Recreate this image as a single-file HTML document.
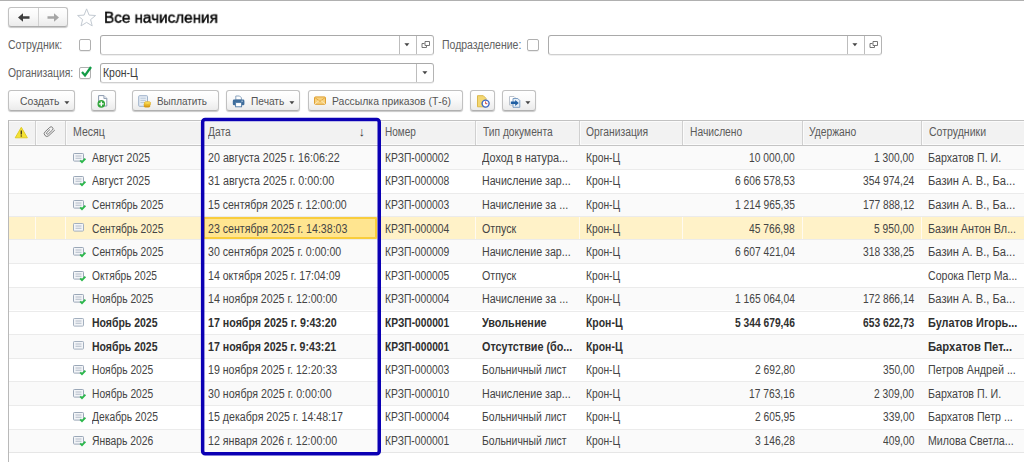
<!DOCTYPE html>
<html lang="ru">
<head>
<meta charset="utf-8">
<title>Все начисления</title>
<style>
html,body{margin:0;padding:0;}
body{width:1024px;height:462px;overflow:hidden;background:#fff;position:relative;
 font-family:"Liberation Sans",Arial,sans-serif;font-size:11px;color:#333;}
.abs{position:absolute;}
#topline{position:absolute;left:0;top:0;width:1024px;height:1px;background:#b0b0b0;}
.btn{position:absolute;box-sizing:border-box;height:21px;top:90px;border:1px solid #c1c1c1;border-bottom-color:#b0b0b0;border-radius:3px;
 background:linear-gradient(#ffffff,#fafafa 45%,#ebebeb);box-shadow:0 1px 1px rgba(0,0,0,.22);}
.caret{position:absolute;width:0;height:0;border-left:3px solid transparent;border-right:3px solid transparent;border-top:3px solid #444;}
.chk{position:absolute;box-sizing:border-box;width:12px;height:12px;border:1px solid #b0b0b0;border-radius:2px;background:#fff;box-shadow:0 1px 0 rgba(0,0,0,.07);}
.inp{position:absolute;box-sizing:border-box;height:20px;border:1px solid #adadad;border-color:#a9a9a9 #b4b4b4 #cfcfcf #acacac;border-radius:3px;background:#fff;box-shadow:0 1px 0 rgba(0,0,0,.06);}
.inp i{position:absolute;top:0;bottom:0;width:1px;background:#bdbdbd;}
#thead{position:absolute;left:8px;top:120px;width:1016px;height:26px;background:#f2f2f2;border-top:1px solid #c2c2c2;border-bottom:1px solid #c4c4c4;box-sizing:border-box;box-shadow:inset 0 1px 0 #fbfbfb,inset 0 -1px 0 #fbfbfb;}
#thead i{position:absolute;top:0;bottom:0;width:1px;background:#d0d0d0;box-shadow:1px 0 0 #fbfbfb;}
#tleft{position:absolute;left:8px;top:120px;width:1px;height:342px;background:#b9b9b9;}
.row{position:absolute;left:9px;width:1015px;height:23.6px;border-top:1px solid #ebebeb;box-sizing:border-box;background:#fff;}
.row.first{border-top:none;}
#lastline{position:absolute;left:9px;width:1015px;height:1px;top:452.1px;background:#e6e6e6;}
.row.alt{background:#fafafa;}
.row.sel{background:#fff2c8;}
.row .vd{position:absolute;top:0;bottom:0;width:1px;background:#fffaf0;margin-left:-9px;}
.selcell{position:absolute;left:194px;top:0px;width:174px;height:22px;box-sizing:border-box;background:#ffe590;border:2px solid #f9cd3c;border-radius:1px;}
.ric{position:absolute;left:73px;}
.t{position:absolute;white-space:nowrap;transform-origin:0 0;}
</style>
</head>
<body>
<div id="topline"></div>

<!-- nav buttons -->
<div class="abs" style="left:8px;top:7px;width:60px;height:20px;box-sizing:border-box;border:1px solid #c1c1c1;border-bottom-color:#adadad;border-radius:3px;background:linear-gradient(#fff,#f8f8f8 50%,#ebebeb);box-shadow:0 1px 1px rgba(0,0,0,.22);">
 <i class="abs" style="left:29px;top:0;bottom:0;width:1px;background:#d0d0d0"></i>
 <svg class="abs" style="left:8px;top:4px" width="14" height="11" viewBox="0 0 14 11"><path d="M1 5.5L6 1.2V4.3H12.5V6.7H6V9.8Z" fill="#3e3e3e"/></svg>
 <svg class="abs" style="left:37px;top:4px" width="14" height="11" viewBox="0 0 14 11"><path d="M13 5.5L8 1.2V4.3H1.5V6.7H8V9.8Z" fill="#a6a6a6"/></svg>
</div>
<svg class="abs" style="left:76px;top:7px" width="22" height="21" viewBox="0 0 22 21"><path d="M10.6 1.9l2.5 6.2 6.5.4-5 4.1 1.6 6.3-5.6-3.5-5.6 3.5 1.6-6.3-5-4.1 6.5-.4z" fill="#fff" stroke="#c3cad2" stroke-width="1"/></svg>

<!-- filters row 1 -->
<div class="chk" style="left:79px;top:39px"></div>
<div class="inp" style="left:100px;top:35px;width:334px"><i style="left:298px"></i><i style="left:315px"></i>
 <svg class="abs" style="left:303.4px;top:7.0px" width="6" height="4" viewBox="0 0 6 4"><path d="M0.4 0.3h5l-2.5 2.9z" fill="#454545"/></svg>
 <svg class="abs" style="left:320px;top:4px" width="10" height="10" viewBox="0 0 10 10"><path d="M4 1.5h4.5v4h-4.5z M3.5 3.5H1v4h4.5V6" fill="none" stroke="#666" stroke-width=".9"/></svg>
</div>
<div class="chk" style="left:527px;top:39px"></div>
<div class="inp" style="left:548px;top:35px;width:334px"><i style="left:298px"></i><i style="left:315px"></i>
 <svg class="abs" style="left:303.4px;top:7.0px" width="6" height="4" viewBox="0 0 6 4"><path d="M0.4 0.3h5l-2.5 2.9z" fill="#454545"/></svg>
 <svg class="abs" style="left:320px;top:4px" width="10" height="10" viewBox="0 0 10 10"><path d="M4 1.5h4.5v4h-4.5z M3.5 3.5H1v4h4.5V6" fill="none" stroke="#666" stroke-width=".9"/></svg>
</div>

<!-- filters row 2 -->
<div class="chk" style="left:79px;top:67px"><svg class="abs" style="left:0;top:-3px" width="13" height="13" viewBox="0 0 13 13"><path d="M2 7l3 3.4L11 2" fill="none" stroke="#129c46" stroke-width="2.3"/></svg></div>
<div class="inp" style="left:100px;top:63px;width:334px"><i style="left:315px"></i>
 <svg class="abs" style="left:321.0px;top:7.0px" width="6" height="4" viewBox="0 0 6 4"><path d="M0.4 0.3h5l-2.5 2.9z" fill="#454545"/></svg>
</div>

<!-- toolbar -->
<div class="btn" style="left:8px;width:67px"><svg class="abs" style="left:55.4px;top:10.0px" width="6" height="4" viewBox="0 0 6 4"><path d="M0.4 0.3h5l-2.5 2.9z" fill="#454545"/></svg></div>
<div class="btn" style="left:91px;width:25px">
 <svg class="abs" style="left:4px;top:3px" width="16" height="15" viewBox="0 0 16 15"><path d="M2.6 1.6h5.3l2.9 2.9v7.5h-8.2z" fill="#fff" stroke="#8a99ae" stroke-width="1"/><path d="M7.9 1.6v2.9h2.9" fill="#e9edf2" stroke="#8a99ae" stroke-width=".9"/><circle cx="5.3" cy="9.9" r="3.8" fill="#2fa53a"/><path d="M5.3 7.5v4.8M2.9 9.9h4.8" stroke="#fff" stroke-width="1.4"/></svg>
</div>
<div class="btn" style="left:132px;width:87px">
 <svg class="abs" style="left:4px;top:3px" width="16" height="15" viewBox="0 0 16 15"><rect x="1.7" y="1.7" width="8.8" height="10.6" rx=".8" fill="#e6edf5" stroke="#9db1c9"/><path d="M3.4 4.2h5.4M3.4 6.4h5.4M3.4 8.6h5.4" stroke="#b7c6d8" stroke-width="1"/><ellipse cx="10" cy="12" rx="3.3" ry="1.5" fill="#d69b18"/><ellipse cx="10.2" cy="10.4" rx="3.3" ry="1.5" fill="#ecbb2c" stroke="#c98f14" stroke-width=".4"/><ellipse cx="10.5" cy="8.9" rx="3.3" ry="1.5" fill="#f8d853" stroke="#d4a01c" stroke-width=".5"/></svg>
</div>
<div class="btn" style="left:226px;width:74px">
 <svg class="abs" style="left:5px;top:4px" width="14" height="13" viewBox="0 0 14 13"><path d="M3.8 1h3.8l1.8 1.8V5H3.8z" fill="#fff" stroke="#7f9bb8" stroke-width=".9"/><rect x=".8" y="4.6" width="11.6" height="5.6" rx="1.3" fill="#3f6d9c"/><rect x="3.6" y="7.6" width="6" height="4.2" fill="#fff" stroke="#4f7aa6" stroke-width=".9"/><rect x="9.3" y="5.7" width="1.6" height=".9" fill="#cfe0f0"/></svg>
 <svg class="abs" style="left:62.3px;top:10.0px" width="6" height="4" viewBox="0 0 6 4"><path d="M0.4 0.3h5l-2.5 2.9z" fill="#454545"/></svg></div>
<div class="btn" style="left:308px;width:155px">
 <svg class="abs" style="left:4px;top:5px" width="14" height="10" viewBox="0 0 14 10"><rect x="1.5" y=".9" width="11" height="7.4" rx="1" fill="#f7d07c" stroke="#dfa032"/><path d="M2 1.6l5 3.8 5-3.8" fill="none" stroke="#e2a63c" stroke-width=".9"/><path d="M2 7.8l3.8-3M12 7.8l-3.8-3" fill="none" stroke="#fbe9c0" stroke-width=".9"/></svg>
</div>
<div class="btn" style="left:470px;width:25px">
 <svg class="abs" style="left:5px;top:3px" width="15" height="15" viewBox="0 0 15 15"><path d="M1.5 1.7h5.8l2.7 2.7v8.4h-8.5z" fill="#f3d772" stroke="#dcb84a"/><circle cx="9.6" cy="9.6" r="3.5" fill="#fff" stroke="#3b66c4" stroke-width="1.4"/><path d="M9.6 7.4v2.3h1.7" fill="none" stroke="#d0342c" stroke-width=".9"/></svg>
</div>
<div class="btn" style="left:502px;width:34px">
 <svg class="abs" style="left:5px;top:4px" width="14" height="14" viewBox="0 0 14 14"><path d="M1.5 1.5h4.5l2 2v6.5h-6.5z" fill="#fff" stroke="#b4bcc6" stroke-width=".9"/><path d="M5 3.5h4.8l2 2v6.8H5z" fill="#e6eff8" stroke="#6f94bd" stroke-width=".9"/><path d="M2.8 6.6h4.4V4.9l3.6 3-3.6 3V9.1H2.8z" fill="#1f5fa3"/></svg>
 <svg class="abs" style="left:22.3px;top:10.0px" width="6" height="4" viewBox="0 0 6 4"><path d="M0.4 0.3h5l-2.5 2.9z" fill="#454545"/></svg></div>

<!-- table -->
<div id="thead">
 <i style="left:27px"></i><i style="left:57px"></i><i style="left:193px"></i><i style="left:371px"></i><i style="left:467px"></i><i style="left:571px"></i><i style="left:674px"></i><i style="left:794px"></i><i style="left:913px"></i>
 <svg class="abs" style="left:6.2px;top:4.6px" width="15" height="13" viewBox="0 0 15 13"><path d="M7.3 1.3L13.4 11.8H1.2z" fill="#f5e235" stroke="#dcc81e" stroke-width=".9" stroke-linejoin="round"/><path d="M7.3 4.6v4" stroke="#4a4020" stroke-width="1.4"/><circle cx="7.3" cy="10" r=".8" fill="#4a4020"/></svg>
 <svg class="abs" style="left:34.5px;top:4px" width="13" height="13" viewBox="0 0 13 13"><g transform="translate(6.3,6.5) rotate(47)"><path d="M2.7,-5V3.2A2.7,2.7 0 0 1 -2.7,3.2V-3.2A1.9,1.9 0 0 1 1.1,-3.2V2.4A1.05,1.05 0 0 1 -1,2.4V-1.8" fill="none" stroke="#707070" stroke-width=".85"/></g></svg>
 <span class="abs" style="left:350.6px;top:3.5px;font-size:13px;line-height:14px;color:#333">↓</span>
</div>
<div class="row alt first" style="top:146.0px;height:22.9px">
</div>
<svg class="ric" style="top:152.5px" width="14" height="11" viewBox="0 0 14 11"><rect x="0.5" y="0.5" width="10" height="7.6" rx="0.8" fill="#f3f5f8" stroke="#9aa7b7" stroke-width="1"/><path d="M2.5 3h6M2.5 5.2h6" stroke="#b3bcc7" stroke-width="1.1"/><path d="M7.2 7.3l1.8 1.9 3.4-3.6" fill="none" stroke="#2bb84b" stroke-width="1.8"/></svg>
<div class="row" style="top:168.9px;height:23.6px">
</div>
<svg class="ric" style="top:176.1px" width="14" height="11" viewBox="0 0 14 11"><rect x="0.5" y="0.5" width="10" height="7.6" rx="0.8" fill="#f3f5f8" stroke="#9aa7b7" stroke-width="1"/><path d="M2.5 3h6M2.5 5.2h6" stroke="#b3bcc7" stroke-width="1.1"/><path d="M7.2 7.3l1.8 1.9 3.4-3.6" fill="none" stroke="#2bb84b" stroke-width="1.8"/></svg>
<div class="row alt" style="top:192.5px;height:23.6px">
</div>
<svg class="ric" style="top:199.7px" width="14" height="11" viewBox="0 0 14 11"><rect x="0.5" y="0.5" width="10" height="7.6" rx="0.8" fill="#f3f5f8" stroke="#9aa7b7" stroke-width="1"/><path d="M2.5 3h6M2.5 5.2h6" stroke="#b3bcc7" stroke-width="1.1"/><path d="M7.2 7.3l1.8 1.9 3.4-3.6" fill="none" stroke="#2bb84b" stroke-width="1.8"/></svg>
<div class="row sel" style="top:216.0px;height:23.0px">
<i class="vd" style="left:35px"></i><i class="vd" style="left:65px"></i><i class="vd" style="left:201px"></i><i class="vd" style="left:379px"></i><i class="vd" style="left:475px"></i><i class="vd" style="left:579px"></i><i class="vd" style="left:682px"></i><i class="vd" style="left:802px"></i><i class="vd" style="left:921px"></i><i class="selcell"></i>
</div>
<svg class="ric" style="top:223.3px" width="14" height="11" viewBox="0 0 14 11"><rect x="0.5" y="0.5" width="10" height="7.6" rx="0.8" fill="#f3f5f8" stroke="#a3afbe" stroke-width="1"/><path d="M2.5 3h6M2.5 5.2h6" stroke="#b3bcc7" stroke-width="1.1"/></svg>
<div class="row alt" style="top:239.0px;height:24.8px">
</div>
<svg class="ric" style="top:246.9px" width="14" height="11" viewBox="0 0 14 11"><rect x="0.5" y="0.5" width="10" height="7.6" rx="0.8" fill="#f3f5f8" stroke="#9aa7b7" stroke-width="1"/><path d="M2.5 3h6M2.5 5.2h6" stroke="#b3bcc7" stroke-width="1.1"/><path d="M7.2 7.3l1.8 1.9 3.4-3.6" fill="none" stroke="#2bb84b" stroke-width="1.8"/></svg>
<div class="row" style="top:263.3px;height:23.6px">
</div>
<svg class="ric" style="top:270.5px" width="14" height="11" viewBox="0 0 14 11"><rect x="0.5" y="0.5" width="10" height="7.6" rx="0.8" fill="#f3f5f8" stroke="#9aa7b7" stroke-width="1"/><path d="M2.5 3h6M2.5 5.2h6" stroke="#b3bcc7" stroke-width="1.1"/><path d="M7.2 7.3l1.8 1.9 3.4-3.6" fill="none" stroke="#2bb84b" stroke-width="1.8"/></svg>
<div class="row alt" style="top:286.9px;height:23.6px">
</div>
<svg class="ric" style="top:294.1px" width="14" height="11" viewBox="0 0 14 11"><rect x="0.5" y="0.5" width="10" height="7.6" rx="0.8" fill="#f3f5f8" stroke="#9aa7b7" stroke-width="1"/><path d="M2.5 3h6M2.5 5.2h6" stroke="#b3bcc7" stroke-width="1.1"/><path d="M7.2 7.3l1.8 1.9 3.4-3.6" fill="none" stroke="#2bb84b" stroke-width="1.8"/></svg>
<div class="row" style="top:310.5px;height:23.6px">
</div>
<svg class="ric" style="top:317.7px" width="14" height="11" viewBox="0 0 14 11"><rect x="0.5" y="0.5" width="10" height="7.6" rx="0.8" fill="#f3f5f8" stroke="#a3afbe" stroke-width="1"/><path d="M2.5 3h6M2.5 5.2h6" stroke="#b3bcc7" stroke-width="1.1"/></svg>
<div class="row alt" style="top:334.1px;height:23.6px">
</div>
<svg class="ric" style="top:341.3px" width="14" height="11" viewBox="0 0 14 11"><rect x="0.5" y="0.5" width="10" height="7.6" rx="0.8" fill="#f3f5f8" stroke="#a3afbe" stroke-width="1"/><path d="M2.5 3h6M2.5 5.2h6" stroke="#b3bcc7" stroke-width="1.1"/></svg>
<div class="row" style="top:357.7px;height:23.6px">
</div>
<svg class="ric" style="top:364.9px" width="14" height="11" viewBox="0 0 14 11"><rect x="0.5" y="0.5" width="10" height="7.6" rx="0.8" fill="#f3f5f8" stroke="#9aa7b7" stroke-width="1"/><path d="M2.5 3h6M2.5 5.2h6" stroke="#b3bcc7" stroke-width="1.1"/><path d="M7.2 7.3l1.8 1.9 3.4-3.6" fill="none" stroke="#2bb84b" stroke-width="1.8"/></svg>
<div class="row alt" style="top:381.3px;height:23.6px">
</div>
<svg class="ric" style="top:388.5px" width="14" height="11" viewBox="0 0 14 11"><rect x="0.5" y="0.5" width="10" height="7.6" rx="0.8" fill="#f3f5f8" stroke="#9aa7b7" stroke-width="1"/><path d="M2.5 3h6M2.5 5.2h6" stroke="#b3bcc7" stroke-width="1.1"/><path d="M7.2 7.3l1.8 1.9 3.4-3.6" fill="none" stroke="#2bb84b" stroke-width="1.8"/></svg>
<div class="row" style="top:404.9px;height:23.6px">
</div>
<svg class="ric" style="top:412.1px" width="14" height="11" viewBox="0 0 14 11"><rect x="0.5" y="0.5" width="10" height="7.6" rx="0.8" fill="#f3f5f8" stroke="#9aa7b7" stroke-width="1"/><path d="M2.5 3h6M2.5 5.2h6" stroke="#b3bcc7" stroke-width="1.1"/><path d="M7.2 7.3l1.8 1.9 3.4-3.6" fill="none" stroke="#2bb84b" stroke-width="1.8"/></svg>
<div class="row alt" style="top:428.5px;height:23.6px">
</div>
<svg class="ric" style="top:435.7px" width="14" height="11" viewBox="0 0 14 11"><rect x="0.5" y="0.5" width="10" height="7.6" rx="0.8" fill="#f3f5f8" stroke="#9aa7b7" stroke-width="1"/><path d="M2.5 3h6M2.5 5.2h6" stroke="#b3bcc7" stroke-width="1.1"/><path d="M7.2 7.3l1.8 1.9 3.4-3.6" fill="none" stroke="#2bb84b" stroke-width="1.8"/></svg>
<div id="lastline"></div>
<span class="t" style="left:104.15px;top:9.00px;font-size:16px;line-height:20px;color:#000;transform:scale(0.9534,0.9167);will-change:transform;-webkit-text-stroke:0.45px #000;">Все начисления</span>
<span class="t" style="left:8.10px;top:38.00px;font-size:12px;line-height:15px;color:#606060;transform:scaleX(0.8794);">Сотрудник:</span>
<span class="t" style="left:442.20px;top:38.00px;font-size:12px;line-height:15px;color:#606060;transform:scaleX(0.8735);">Подразделение:</span>
<span class="t" style="left:8.10px;top:66.00px;font-size:12px;line-height:15px;color:#606060;transform:scaleX(0.8610);">Организация:</span>
<span class="t" style="left:103.40px;top:66.00px;font-size:12px;line-height:15px;color:#3a3a3a;transform:scaleX(0.8709);">Крон-Ц</span>
<span class="t" style="left:19.90px;top:94.00px;font-size:11.6px;line-height:14px;color:#555;transform:scaleX(0.8973);">Создать</span>
<span class="t" style="left:156.80px;top:94.00px;font-size:11.6px;line-height:14px;color:#555;transform:scaleX(0.8562);">Выплатить</span>
<span class="t" style="left:250.70px;top:94.00px;font-size:11.6px;line-height:14px;color:#555;transform:scaleX(0.8777);">Печать</span>
<span class="t" style="left:332.30px;top:94.00px;font-size:11.6px;line-height:14px;color:#555;transform:scaleX(0.8982);">Рассылка приказов (Т-6)</span>
<span class="t" style="left:72.50px;top:125.00px;font-size:12px;line-height:15px;color:#5a5a5a;transform:scaleX(0.8815);">Месяц</span>
<span class="t" style="left:208.00px;top:125.00px;font-size:12px;line-height:15px;color:#5a5a5a;transform:scaleX(0.8551);">Дата</span>
<span class="t" style="left:384.60px;top:125.00px;font-size:12px;line-height:15px;color:#5a5a5a;transform:scaleX(0.8346);">Номер</span>
<span class="t" style="left:483.00px;top:125.00px;font-size:12px;line-height:15px;color:#5a5a5a;transform:scaleX(0.8518);">Тип документа</span>
<span class="t" style="left:586.30px;top:125.00px;font-size:12px;line-height:15px;color:#5a5a5a;transform:scaleX(0.8584);">Организация</span>
<span class="t" style="left:689.50px;top:125.00px;font-size:12px;line-height:15px;color:#5a5a5a;transform:scaleX(0.8560);">Начислено</span>
<span class="t" style="left:809.20px;top:125.00px;font-size:12px;line-height:15px;color:#5a5a5a;transform:scaleX(0.8580);">Удержано</span>
<span class="t" style="left:928.90px;top:125.00px;font-size:12px;line-height:15px;color:#5a5a5a;transform:scaleX(0.8772);">Сотрудники</span>
<span class="t" style="left:91.70px;top:151.00px;font-size:12px;line-height:15px;color:#444;transform:scaleX(0.8771);">Август 2025</span>
<span class="t" style="left:208.00px;top:151.00px;font-size:12px;line-height:15px;color:#444;transform:scaleX(0.8920);">20 августа 2025 г. 16:06:22</span>
<span class="t" style="left:384.50px;top:151.00px;font-size:12px;line-height:15px;color:#444;transform:scaleX(0.8604);">КРЗП-000002</span>
<span class="t" style="left:482.00px;top:151.00px;font-size:12px;line-height:15px;color:#444;transform:scaleX(0.9063);">Доход в натура...</span>
<span class="t" style="left:586.30px;top:151.00px;font-size:12px;line-height:15px;color:#444;transform:scaleX(0.8558);">Крон-Ц</span>
<span class="t" style="left:749.01px;top:151.00px;font-size:12px;line-height:15px;color:#444;transform:scaleX(0.8543);">10 000,00</span>
<span class="t" style="left:874.11px;top:151.00px;font-size:12px;line-height:15px;color:#444;transform:scaleX(0.8543);">1 300,00</span>
<span class="t" style="left:928.20px;top:151.00px;font-size:12px;line-height:15px;color:#444;transform:scaleX(0.8887);">Бархатов П. И.</span>
<span class="t" style="left:91.70px;top:174.00px;font-size:12px;line-height:15px;color:#444;transform:scaleX(0.8771);">Август 2025</span>
<span class="t" style="left:208.00px;top:174.00px;font-size:12px;line-height:15px;color:#444;transform:scaleX(0.8952);">31 августа 2025 г. 0:00:00</span>
<span class="t" style="left:384.50px;top:174.00px;font-size:12px;line-height:15px;color:#444;transform:scaleX(0.8604);">КРЗП-000008</span>
<span class="t" style="left:482.00px;top:174.00px;font-size:12px;line-height:15px;color:#444;transform:scaleX(0.8869);">Начисление зар...</span>
<span class="t" style="left:586.30px;top:174.00px;font-size:12px;line-height:15px;color:#444;transform:scaleX(0.8558);">Крон-Ц</span>
<span class="t" style="left:734.76px;top:174.00px;font-size:12px;line-height:15px;color:#444;transform:scaleX(0.8543);">6 606 578,53</span>
<span class="t" style="left:862.71px;top:174.00px;font-size:12px;line-height:15px;color:#444;transform:scaleX(0.8543);">354 974,24</span>
<span class="t" style="left:928.20px;top:174.00px;font-size:12px;line-height:15px;color:#444;transform:scaleX(0.9307);">Базин А. В., Ба...</span>
<span class="t" style="left:91.70px;top:198.00px;font-size:12px;line-height:15px;color:#444;transform:scaleX(0.8512);">Сентябрь 2025</span>
<span class="t" style="left:208.00px;top:198.00px;font-size:12px;line-height:15px;color:#444;transform:scaleX(0.8805);">15 сентября 2025 г. 12:00:00</span>
<span class="t" style="left:384.50px;top:198.00px;font-size:12px;line-height:15px;color:#444;transform:scaleX(0.8604);">КРЗП-000003</span>
<span class="t" style="left:482.00px;top:198.00px;font-size:12px;line-height:15px;color:#444;transform:scaleX(0.8917);">Начисление за ...</span>
<span class="t" style="left:586.30px;top:198.00px;font-size:12px;line-height:15px;color:#444;transform:scaleX(0.8558);">Крон-Ц</span>
<span class="t" style="left:734.76px;top:198.00px;font-size:12px;line-height:15px;color:#444;transform:scaleX(0.8543);">1 214 965,35</span>
<span class="t" style="left:862.71px;top:198.00px;font-size:12px;line-height:15px;color:#444;transform:scaleX(0.8543);">177 888,12</span>
<span class="t" style="left:928.20px;top:198.00px;font-size:12px;line-height:15px;color:#444;transform:scaleX(0.9307);">Базин А. В., Ба...</span>
<span class="t" style="left:91.70px;top:222.00px;font-size:12px;line-height:15px;color:#444;transform:scaleX(0.8512);">Сентябрь 2025</span>
<span class="t" style="left:208.00px;top:222.00px;font-size:12px;line-height:15px;color:#444;transform:scaleX(0.8849);">23 сентября 2025 г. 14:38:03</span>
<span class="t" style="left:384.50px;top:222.00px;font-size:12px;line-height:15px;color:#444;transform:scaleX(0.8604);">КРЗП-000004</span>
<span class="t" style="left:482.00px;top:222.00px;font-size:12px;line-height:15px;color:#444;transform:scaleX(0.8879);">Отпуск</span>
<span class="t" style="left:586.30px;top:222.00px;font-size:12px;line-height:15px;color:#444;transform:scaleX(0.8558);">Крон-Ц</span>
<span class="t" style="left:749.01px;top:222.00px;font-size:12px;line-height:15px;color:#444;transform:scaleX(0.8543);">45 766,98</span>
<span class="t" style="left:874.11px;top:222.00px;font-size:12px;line-height:15px;color:#444;transform:scaleX(0.8543);">5 950,00</span>
<span class="t" style="left:928.20px;top:222.00px;font-size:12px;line-height:15px;color:#444;transform:scaleX(0.8970);">Базин Антон Вл...</span>
<span class="t" style="left:91.70px;top:245.00px;font-size:12px;line-height:15px;color:#444;transform:scaleX(0.8512);">Сентябрь 2025</span>
<span class="t" style="left:208.00px;top:245.00px;font-size:12px;line-height:15px;color:#444;transform:scaleX(0.8830);">30 сентября 2025 г. 0:00:00</span>
<span class="t" style="left:384.50px;top:245.00px;font-size:12px;line-height:15px;color:#444;transform:scaleX(0.8604);">КРЗП-000009</span>
<span class="t" style="left:482.00px;top:245.00px;font-size:12px;line-height:15px;color:#444;transform:scaleX(0.8869);">Начисление зар...</span>
<span class="t" style="left:586.30px;top:245.00px;font-size:12px;line-height:15px;color:#444;transform:scaleX(0.8558);">Крон-Ц</span>
<span class="t" style="left:734.76px;top:245.00px;font-size:12px;line-height:15px;color:#444;transform:scaleX(0.8543);">6 607 421,04</span>
<span class="t" style="left:862.71px;top:245.00px;font-size:12px;line-height:15px;color:#444;transform:scaleX(0.8543);">318 338,25</span>
<span class="t" style="left:928.20px;top:245.00px;font-size:12px;line-height:15px;color:#444;transform:scaleX(0.9307);">Базин А. В., Ба...</span>
<span class="t" style="left:91.70px;top:269.00px;font-size:12px;line-height:15px;color:#444;transform:scaleX(0.8495);">Октябрь 2025</span>
<span class="t" style="left:208.00px;top:269.00px;font-size:12px;line-height:15px;color:#444;transform:scaleX(0.8810);">14 октября 2025 г. 17:04:09</span>
<span class="t" style="left:384.50px;top:269.00px;font-size:12px;line-height:15px;color:#444;transform:scaleX(0.8604);">КРЗП-000005</span>
<span class="t" style="left:482.00px;top:269.00px;font-size:12px;line-height:15px;color:#444;transform:scaleX(0.8879);">Отпуск</span>
<span class="t" style="left:586.30px;top:269.00px;font-size:12px;line-height:15px;color:#444;transform:scaleX(0.8558);">Крон-Ц</span>
<span class="t" style="left:928.20px;top:269.00px;font-size:12px;line-height:15px;color:#444;transform:scaleX(0.8804);">Сорока Петр Ма...</span>
<span class="t" style="left:91.70px;top:292.00px;font-size:12px;line-height:15px;color:#444;transform:scaleX(0.8543);">Ноябрь 2025</span>
<span class="t" style="left:208.00px;top:292.00px;font-size:12px;line-height:15px;color:#444;transform:scaleX(0.8847);">14 ноября 2025 г. 12:00:00</span>
<span class="t" style="left:384.50px;top:292.00px;font-size:12px;line-height:15px;color:#444;transform:scaleX(0.8604);">КРЗП-000004</span>
<span class="t" style="left:482.00px;top:292.00px;font-size:12px;line-height:15px;color:#444;transform:scaleX(0.8917);">Начисление за ...</span>
<span class="t" style="left:586.30px;top:292.00px;font-size:12px;line-height:15px;color:#444;transform:scaleX(0.8558);">Крон-Ц</span>
<span class="t" style="left:734.76px;top:292.00px;font-size:12px;line-height:15px;color:#444;transform:scaleX(0.8543);">1 165 064,04</span>
<span class="t" style="left:862.71px;top:292.00px;font-size:12px;line-height:15px;color:#444;transform:scaleX(0.8543);">172 866,14</span>
<span class="t" style="left:928.20px;top:292.00px;font-size:12px;line-height:15px;color:#444;transform:scaleX(0.9307);">Базин А. В., Ба...</span>
<span class="t" style="left:91.70px;top:316.00px;font-size:12px;line-height:15px;color:#303030;transform:scaleX(0.8737);font-weight:bold;">Ноябрь 2025</span>
<span class="t" style="left:208.00px;top:316.00px;font-size:12px;line-height:15px;color:#303030;transform:scaleX(0.8884);font-weight:bold;">17 ноября 2025 г. 9:43:20</span>
<span class="t" style="left:384.50px;top:316.00px;font-size:12px;line-height:15px;color:#303030;transform:scaleX(0.8523);font-weight:bold;">КРЗП-000001</span>
<span class="t" style="left:482.00px;top:316.00px;font-size:12px;line-height:15px;color:#303030;transform:scaleX(0.9038);font-weight:bold;">Увольнение</span>
<span class="t" style="left:586.30px;top:316.00px;font-size:12px;line-height:15px;color:#303030;transform:scaleX(0.8691);font-weight:bold;">Крон-Ц</span>
<span class="t" style="left:734.76px;top:316.00px;font-size:12px;line-height:15px;color:#303030;transform:scaleX(0.8543);font-weight:bold;">5 344 679,46</span>
<span class="t" style="left:862.71px;top:316.00px;font-size:12px;line-height:15px;color:#303030;transform:scaleX(0.8543);font-weight:bold;">653 622,73</span>
<span class="t" style="left:928.20px;top:316.00px;font-size:12px;line-height:15px;color:#303030;transform:scaleX(0.9062);font-weight:bold;">Булатов Игорь...</span>
<span class="t" style="left:91.70px;top:340.00px;font-size:12px;line-height:15px;color:#303030;transform:scaleX(0.8737);font-weight:bold;">Ноябрь 2025</span>
<span class="t" style="left:208.00px;top:340.00px;font-size:12px;line-height:15px;color:#303030;transform:scaleX(0.8850);font-weight:bold;">17 ноября 2025 г. 9:43:21</span>
<span class="t" style="left:384.50px;top:340.00px;font-size:12px;line-height:15px;color:#303030;transform:scaleX(0.8523);font-weight:bold;">КРЗП-000001</span>
<span class="t" style="left:482.00px;top:340.00px;font-size:12px;line-height:15px;color:#303030;transform:scaleX(0.9001);font-weight:bold;">Отсутствие (бо...</span>
<span class="t" style="left:586.30px;top:340.00px;font-size:12px;line-height:15px;color:#303030;transform:scaleX(0.8691);font-weight:bold;">Крон-Ц</span>
<span class="t" style="left:928.20px;top:340.00px;font-size:12px;line-height:15px;color:#303030;transform:scaleX(0.9394);font-weight:bold;">Бархатов Пет...</span>
<span class="t" style="left:91.70px;top:363.00px;font-size:12px;line-height:15px;color:#444;transform:scaleX(0.8543);">Ноябрь 2025</span>
<span class="t" style="left:208.00px;top:363.00px;font-size:12px;line-height:15px;color:#444;transform:scaleX(0.8847);">19 ноября 2025 г. 12:20:33</span>
<span class="t" style="left:384.50px;top:363.00px;font-size:12px;line-height:15px;color:#444;transform:scaleX(0.8604);">КРЗП-000003</span>
<span class="t" style="left:482.00px;top:363.00px;font-size:12px;line-height:15px;color:#444;transform:scaleX(0.8663);">Больничный лист</span>
<span class="t" style="left:586.30px;top:363.00px;font-size:12px;line-height:15px;color:#444;transform:scaleX(0.8558);">Крон-Ц</span>
<span class="t" style="left:754.71px;top:363.00px;font-size:12px;line-height:15px;color:#444;transform:scaleX(0.8543);">2 692,80</span>
<span class="t" style="left:882.66px;top:363.00px;font-size:12px;line-height:15px;color:#444;transform:scaleX(0.8543);">350,00</span>
<span class="t" style="left:928.20px;top:363.00px;font-size:12px;line-height:15px;color:#444;transform:scaleX(0.8916);">Петров Андрей ...</span>
<span class="t" style="left:91.70px;top:387.00px;font-size:12px;line-height:15px;color:#444;transform:scaleX(0.8543);">Ноябрь 2025</span>
<span class="t" style="left:208.00px;top:387.00px;font-size:12px;line-height:15px;color:#444;transform:scaleX(0.8876);">30 ноября 2025 г. 0:00:00</span>
<span class="t" style="left:384.50px;top:387.00px;font-size:12px;line-height:15px;color:#444;transform:scaleX(0.8604);">КРЗП-000010</span>
<span class="t" style="left:482.00px;top:387.00px;font-size:12px;line-height:15px;color:#444;transform:scaleX(0.8869);">Начисление зар...</span>
<span class="t" style="left:586.30px;top:387.00px;font-size:12px;line-height:15px;color:#444;transform:scaleX(0.8558);">Крон-Ц</span>
<span class="t" style="left:749.01px;top:387.00px;font-size:12px;line-height:15px;color:#444;transform:scaleX(0.8543);">17 763,16</span>
<span class="t" style="left:874.11px;top:387.00px;font-size:12px;line-height:15px;color:#444;transform:scaleX(0.8543);">2 309,00</span>
<span class="t" style="left:928.20px;top:387.00px;font-size:12px;line-height:15px;color:#444;transform:scaleX(0.8887);">Бархатов П. И.</span>
<span class="t" style="left:91.70px;top:410.00px;font-size:12px;line-height:15px;color:#444;transform:scaleX(0.8594);">Декабрь 2025</span>
<span class="t" style="left:208.00px;top:410.00px;font-size:12px;line-height:15px;color:#444;transform:scaleX(0.8869);">15 декабря 2025 г. 14:48:17</span>
<span class="t" style="left:384.50px;top:410.00px;font-size:12px;line-height:15px;color:#444;transform:scaleX(0.8604);">КРЗП-000004</span>
<span class="t" style="left:482.00px;top:410.00px;font-size:12px;line-height:15px;color:#444;transform:scaleX(0.8663);">Больничный лист</span>
<span class="t" style="left:586.30px;top:410.00px;font-size:12px;line-height:15px;color:#444;transform:scaleX(0.8558);">Крон-Ц</span>
<span class="t" style="left:754.71px;top:410.00px;font-size:12px;line-height:15px;color:#444;transform:scaleX(0.8543);">2 605,95</span>
<span class="t" style="left:882.66px;top:410.00px;font-size:12px;line-height:15px;color:#444;transform:scaleX(0.8543);">339,00</span>
<span class="t" style="left:928.20px;top:410.00px;font-size:12px;line-height:15px;color:#444;transform:scaleX(0.8878);">Бархатов Петр ...</span>
<span class="t" style="left:91.70px;top:434.00px;font-size:12px;line-height:15px;color:#444;transform:scaleX(0.8603);">Январь 2026</span>
<span class="t" style="left:208.00px;top:434.00px;font-size:12px;line-height:15px;color:#444;transform:scaleX(0.8886);">12 января 2026 г. 12:00:00</span>
<span class="t" style="left:384.50px;top:434.00px;font-size:12px;line-height:15px;color:#444;transform:scaleX(0.8604);">КРЗП-000001</span>
<span class="t" style="left:482.00px;top:434.00px;font-size:12px;line-height:15px;color:#444;transform:scaleX(0.8663);">Больничный лист</span>
<span class="t" style="left:586.30px;top:434.00px;font-size:12px;line-height:15px;color:#444;transform:scaleX(0.8558);">Крон-Ц</span>
<span class="t" style="left:754.71px;top:434.00px;font-size:12px;line-height:15px;color:#444;transform:scaleX(0.8543);">3 146,28</span>
<span class="t" style="left:882.66px;top:434.00px;font-size:12px;line-height:15px;color:#444;transform:scaleX(0.8543);">409,00</span>
<span class="t" style="left:928.20px;top:434.00px;font-size:12px;line-height:15px;color:#444;transform:scaleX(0.8838);">Милова Светла...</span>
<div id="tleft"></div>
<svg id="frame" width="1024" height="462" viewBox="0 0 1024 462" style="position:absolute;left:0;top:0;pointer-events:none"><rect x="202.65" y="119.4" width="176.6" height="334.3" rx="2.5" fill="none" stroke="#0b00b4" stroke-width="3.5"/></svg>
</body>
</html>
